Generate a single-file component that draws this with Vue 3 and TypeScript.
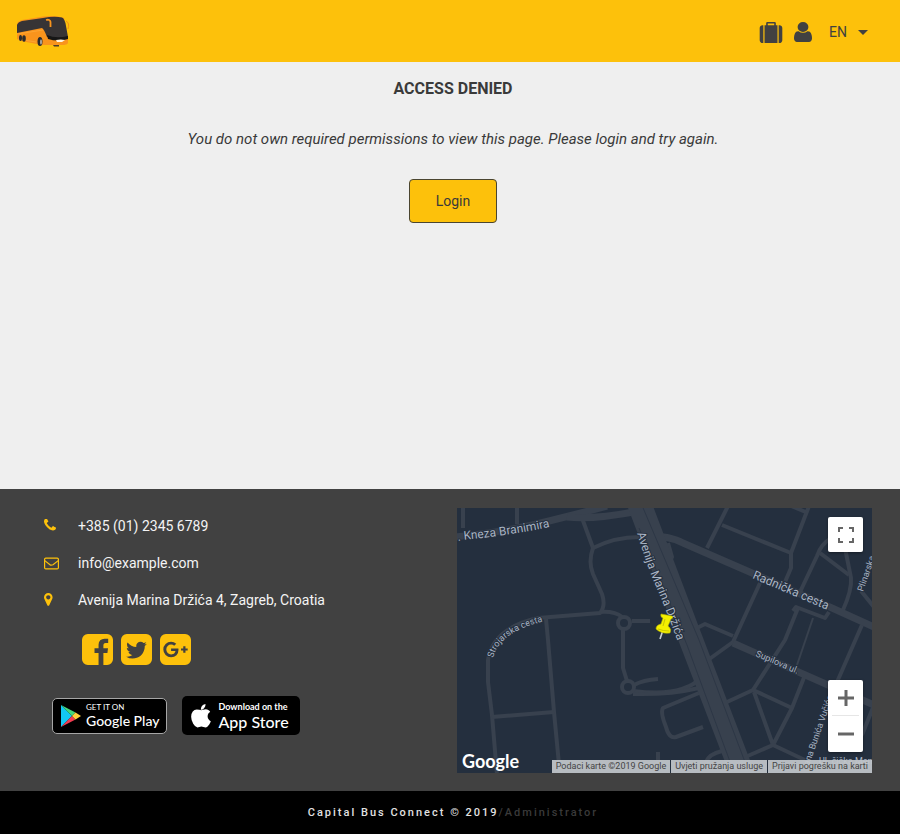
<script setup lang="ts">
import { ref } from 'vue'

interface Contact {
  icon: 'phone' | 'mail' | 'pin'
  text: string
  href: string
}

interface Social {
  name: string
  path: string
}

const language = ref('EN')

const contacts: Contact[] = [
  { icon: 'phone', text: '+385 (01) 2345 6789', href: 'tel:+385123456789' },
  { icon: 'mail', text: 'info@example.com', href: 'mailto:info@example.com' },
  { icon: 'pin', text: 'Avenija Marina Držića 4, Zagreb, Croatia', href: '#map' },
]

const tile = 'v960q0 119-84.5 203.5t-203.5 84.5h-960q-119 0-203.5-84.5t-84.5-203.5v-960q0-119 84.5-203.5t203.5-84.5h960q119 0 203.5 84.5t84.5 203.5z'

const socials: Social[] = [
  {
    name: 'Facebook',
    path: 'M1376 128q119 0 203.5 84.5t84.5 203.5v960q0 119-84.5 203.5t-203.5 84.5h-188v-595h199l30-232h-229v-148q0-56 23.5-84t91.5-28l122-1v-207q-63-9-178-9-136 0-217.5 80t-81.5 226v171h-200v232h200v595h-532q-119 0-203.5-84.5t-84.5-203.5v-960q0-119 84.5-203.5t203.5-84.5h960z',
  },
  {
    name: 'Twitter',
    path: 'M1408 610q-56 25-121 34 68-40 93-117-65 38-134 51-61-66-153-66-87 0-148.5 61.5t-61.5 148.5q0 29 5 48-129-7-242-65t-192-155q-29 50-29 106 0 114 91 175-47-1-100-26v2q0 75 50 133.5t123 72.5q-29 8-51 8-13 0-39-4 21 63 74.5 104t121.5 42q-116 90-261 90-26 0-50-3 148 94 322 94 112 0 210-35.5t168-95 120.5-137 75-162 24.5-168.5q0-18-1-27 63-45 105-109zm256-194' + tile,
  },
  {
    name: 'Google Plus',
    path: 'M1045 905q0-26-6-64h-362v132h217q-3 24-16.5 50t-37.5 53-66.5 44.5-96.5 17.5q-99 0-169-71t-70-171 70-171 169-71q92 0 153 59l104-101q-108-100-257-100-160 0-272 112.5t-112 271.5 112 271.5 272 112.5q165 0 266.5-105t101.5-270zm345 46h109v-110h-109v-110h-110v110h-110v110h110v110h110v-110zm274-535' + tile,
  },
]

const streets: string[] = [
  'M6 -2V20',
  'M60 -2V16',
  'M125 10L136 40Q131 54 136 66L145 86Q149 98 143 105L81 110Q36 120 31 152V174L35 207L40 267',
  'M136 40Q158 29 182 29',
  'M143 104Q158 103 165 109',
  'M175 113H193',
  'M166 122V160L170 173',
  'M177 177Q186 172 201 171',
  'M176 183Q208 187 225 181T239 171',
  'M176 186Q212 187 242 180',
  'M89 111L91 132L97 204L103 267',
  'M35 209L97 204',
  'M211 35L215 49L210 60',
  'M271 -2L250 40',
  'M265 17L334 45',
  'M352 -2L334 45V60L328 74',
  'M332 -3L351 5',
  'M373 31Q364 36 360 48L343 84',
  'M363 45L392 67',
  'M388 40L394 70Q395 82 386 102',
  'M404 83L417 99',
  'M303 75L276 134L251 152',
  'M240 120L248 116L276 128',
  'M336 103L339 99L368 110L372 104',
  'M341 100L328 132L296 182L270 194',
  'M405 117L380 174',
  'M296 182L335 200',
  'M348 167L335 200L316 237L297 184',
  'M286 250L316 237L350 253',
  'M417 197L405 227',
  'M242 185L206 200Q203 204 209 219Q212 231 219 229L246 219',
  'M201 244V255',
  'M249 254Q252 246 265 243',
]
</script>

<template>
  <div class="page">
    <header class="topbar">
      <a class="brand" href="#" aria-label="Home">
        <svg width="54" height="34" viewBox="0 0 54 34">
          <path d="M1 10Q2 7 6 6L27 2.500Q40 1 48 4L52 24V29Q51 31 46 31L26 31L5 27L1 25Z" fill="#f9941c" />
          <path d="M1 19V11Q2 8 6 7L27 4Q38 2 46 3.500Q49 5 50 12L52 23Q50 25 44 25L31 23Q28 15 26 14Z" fill="#373435" />
          <path d="M31 21Q40 25 52 22V25Q42 28 32 25Z" fill="#161616" />
          <path d="M40 26Q45 25 49 26L46 28H41Z" fill="#fff4df" />
          <path d="M30 6Q34 5 34.500 8V13" fill="none" stroke="#f9941c" stroke-width="1.800" />
          <path d="M50 7Q54 9 52 15" fill="none" stroke="#ed8f16" />
          <path d="M1 20L27 16M2 25L20 28" stroke="#ffb03e" stroke-width=".6" />
          <ellipse cx="4.500" cy="24" rx="1.500" ry="3" fill="#2b2b2b" />
          <ellipse cx="8" cy="24.500" rx="1.800" ry="3.200" fill="#2b2b2b" />
          <ellipse cx="24" cy="27.500" rx="2.500" ry="4.500" fill="#2b2b2b" />
          <ellipse cx="25" cy="28" rx="1" ry="2.800" fill="#aaa69f" />
          <path d="M37 31H43V32.500H38Z" fill="#4b3b2b" />
        </svg>
      </a>
      <nav class="tools">
        <a href="#" aria-label="Trips">
          <svg width="24" height="21" viewBox="0 0 1792 1664">
            <path d="M640 256h512v-128h-512v128zm-352 0v1408h-64q-92 0-158-66t-66-158v-960q0-92 66-158t158-66h64zm1120 0v1408h-1024v-1408h128v-160q0-40 28-68t68-28h576q40 0 68 28t28 68v160h128zm384 224v960q0 92-66 158t-158 66h-64v-1408h64q92 0 158 66t66 158z" />
          </svg>
        </a>
        <a href="#" aria-label="Account">
          <svg width="18" height="20" viewBox="256 128 1280 1536" preserveAspectRatio="none">
            <path d="M1536 1399q0 109-62.5 187t-150.5 78h-854q-88 0-150.5-78t-62.5-187q0-85 8.5-160.5t31.5-152 58.5-131 94-89 134.5-34.5q131 128 313 128t313-128q76 0 134.5 34.5t94 89 58.5 131 31.5 152 8.5 160.5zm-256-887q0 159-112.5 271.5t-271.5 112.5-271.5-112.5-112.5-271.5 112.5-271.5 271.5-112.5 271.5 112.5 112.5 271.5z" />
          </svg>
        </a>
        <div class="language">
          <select v-model="language" aria-label="Language">
            <option>EN</option>
            <option>HR</option>
          </select>
          <span class="caret"></span>
        </div>
      </nav>
    </header>

    <main class="content">
      <h1>ACCESS DENIED</h1>
      <p>You do not own required permissions to view this page. Please login and try again.</p>
      <button class="login" type="button">Login</button>
    </main>

    <footer>
      <div class="info">
        <section class="about">
          <ul class="contacts">
            <li v-for="item in contacts" :key="item.icon">
              <svg v-if="item.icon === 'phone'" width="15" height="15" viewBox="192 192 1760 1760">
                <path d="M1600 1240q0 27-10 70.5t-21 68.5q-21 50-122 106-94 51-186 51-27 0-53-3.5t-57.5-12.5-47-14.5-55.5-20.5-49-18q-98-35-175-83-127-79-264-216t-216-264q-48-77-83-175-3-9-18-49t-20.5-55.5-14.5-47-12.5-57.5-3.5-53q0-92 51-186 56-101 106-122 25-11 68.5-21t70.5-10q14 0 21 3 18 6 53 76 11 19 30 54t35 63.5 31 53.5q3 4 17.5 25t21.5 35.5 7 28.5q0 20-28.5 50t-62 55-62 53-28.5 46q0 9 5 22.5t8.5 20.5 14 24 11.5 19q76 137 174 235t235 174q2 1 19 11.5t24 14 20.5 8.5 22.5 5q18 0 46-28.5t53-62 55-62 50-28.5q14 0 28.5 7t35.5 21.5 25 17.5q25 15 53.5 31t63.5 35 54 30q70 35 76 53 3 7 3 21z" />
              </svg>
              <svg v-else-if="item.icon === 'mail'" width="15" height="15" viewBox="0 0 15 15">
                <g fill="none" stroke="#fdc10b" stroke-width="1.2">
                  <rect x=".6" y="2.1" width="13.8" height="10.8" rx="1.2" />
                  <path d="M.8 4.6Q5 8 6 8.8T9 8.8L14.2 4.6" />
                </g>
              </svg>
              <svg v-else width="15" height="15" viewBox="384 128 1792 1792">
                <path d="M1152 640q0-106-75-181t-181-75-181 75-75 181 75 181 181 75 181-75 75-181zm256 0q0 109-33 179l-364 774q-16 33-47.5 52t-67.5 19-67.5-19-46.5-52l-365-774q-33-70-33-179 0-212 150-362t362-150 362 150 150 362z" />
              </svg>
              <a :href="item.href">{{ item.text }}</a>
            </li>
          </ul>
          <div class="socials">
            <a v-for="item in socials" :key="item.name" href="#" :aria-label="item.name">
              <svg width="31" height="31" viewBox="128 128 1536 1536"><path :d="item.path" /></svg>
            </a>
          </div>
          <div class="stores">
            <a class="store play" href="#">
              <svg width="22" height="24" viewBox="0 0 22 24">
                <path d="M1 1V23L12 12Z" fill="#12c8f4" />
                <path d="M1 1L15.500 8.500L12 12Z" fill="#43d77b" />
                <path d="M1 23L15.500 15.500L12 12Z" fill="#f23b50" />
                <path d="M15.500 8.500L21 12L15.500 15.500L12 12Z" fill="#ffd13b" />
              </svg>
              <span class="label"><small>GET IT ON</small><b>Google Play</b></span>
            </a>
            <a class="store apple" href="#">
              <svg width="20" height="24" viewBox="190 0 1400 1700">
                <path d="M1585 1215q-39 125-123 250-129 196-257 196-49 0-140-32-86-32-151-32-61 0-142 33-81 34-132 34-152 0-301-259-147-261-147-503 0-228 113-374 113-144 284-144 72 0 177 30 104 30 138 30 45 0 143-34 102-34 173-34 119 0 213 65 52 36 104 100-79 67-114 118-65 94-65 207 0 124 69 223t158 126zm-376-1173q0 61-29 136-30 75-93 138-54 54-108 72-37 11-104 17 3-149 78-257 74-107 250-148 1 3 2.5 11t2.5 11q0 4 .5 10t.5 10z" />
              </svg>
              <span class="label"><small>Download on the</small><b>App Store</b></span>
            </a>
          </div>
        </section>

        <section id="map" class="map" aria-label="Map">
          <svg class="canvas" viewBox="0 0 415 265" preserveAspectRatio="xMidYMid slice">
            <defs>
              <path id="strojarska" d="M36 150Q42 125 84 114" />
              <path id="avenija" d="M180 25Q189 56 200 81T223 140" />
              <path id="kneza" d="M1 33L5 32Q50 28 98 18" />
            </defs>
            <g class="streets">
              <path v-for="d in streets" :key="d" :d="d" />
              <circle cx="167" cy="115" r="6" />
              <circle cx="171" cy="179" r="6" />
              <path class="thin" d="M356 110L340 157" />
              <path class="wide" d="M-2 29Q50 24 92 13L120 6L150 -2" />
              <path class="wide" d="M110 9Q135 12 182 3" />
              <path class="wide" d="M190 28Q214 28 226 35L295 65L375 100L417 119" />
              <path class="wide" d="M276 135L371 177L417 197" />
              <path class="avenue" d="M182 -5L234 132L287 270" />
              <path class="divider" d="M184 -5L242 132L294 270M182 20L230 137L279 270" />
            </g>
            <g class="names">
              <text class="large"><textPath href="#kneza">. Kneza Branimira</textPath></text>
              <text class="large"><textPath href="#avenija">Avenija Marina Držića</textPath></text>
              <text class="large" transform="translate(295 70) rotate(23)">Radnička cesta</text>
              <text><textPath href="#strojarska">Strojarska cesta</textPath></text>
              <text transform="translate(298 148) rotate(23)">Supilova ul.</text>
              <text transform="translate(406 84) rotate(-71)">Plinarska</text>
              <text transform="translate(352 258) rotate(-71)">ana Bunića Vučića</text>
              <text transform="translate(362 256)">Ul. čička Men</text>
            </g>
            <g class="marker">
              <path d="M206 122L203 131" stroke="#c9ced4" stroke-width="1.600" />
              <path d="M204 106L215 108Q217 110 214 111L211 118Q215 121 213 125Q204 126 199 121Q199 117 204 116L206 110Q203 109 204 106Z" fill="#f5f000" stroke="#b9b500" stroke-width=".6" />
              <path d="M208 111L206 118M201 121Q206 123 212 123" fill="none" stroke="#c8c400" />
            </g>
          </svg>
          <span class="google">Google</span>
          <button class="fullscreen" type="button" aria-label="Toggle fullscreen">
            <svg width="18" height="18" viewBox="0 0 18 18"><path d="M2 6V2H6M12 2H16V6M16 12V16H12M6 16H2V12" /></svg>
          </button>
          <div class="zoom">
            <button type="button" aria-label="Zoom in"><svg width="18" height="18" viewBox="0 0 18 18"><path d="M1 9H17M9 1V17" /></svg></button>
            <button type="button" aria-label="Zoom out"><svg width="18" height="18" viewBox="0 0 18 18"><path d="M1 9H17" /></svg></button>
          </div>
          <div class="terms">
            <span>Podaci karte ©2019 Google</span>
            <a href="#">Uvjeti pružanja usluge</a>
            <a href="#">Prijavi pogrešku na karti</a>
          </div>
        </section>
      </div>
      <div class="legal">Capital Bus Connect © 2019<a href="#">/Administrator</a></div>
    </footer>
  </div>
</template>

<style>
body {
  margin: 0;
  background: #efefef;
}
</style>

<style scoped>
.page {
  display: flex;
  flex-direction: column;
  min-height: 100vh;
  font-family: Roboto, "Liberation Sans", sans-serif;
  font-size: 14px;
  line-height: 20px;
  color: #3a3a3a;
}

a {
  color: inherit;
  text-decoration: none;
}

svg {
  display: block;
  flex: none;
}

button {
  font: inherit;
  color: inherit;
  cursor: pointer;
}

.topbar {
  display: flex;
  align-items: center;
  justify-content: space-between;
  height: 62px;
  padding: 0 32px 0 16px;
  background: #fdc10b;
}

.tools {
  display: flex;
  align-items: center;
  gap: 11px;
  padding-top: 2px;
  fill: #414141;
}

.language {
  display: flex;
  align-items: center;
  gap: 10px;
  margin-left: 6px;
}

.language select {
  appearance: none;
  padding: 0;
  border: 0;
  background: none;
  font: inherit;
  color: #414141;
}

.caret {
  border: 5px solid transparent;
  border-top-color: #414141;
  border-bottom: 0;
}

.content {
  display: flex;
  flex: 1;
  flex-direction: column;
  align-items: center;
  padding: 17px 0 0 6px;
}

h1 {
  margin: 0 0 30px;
  font-size: 16px;
  line-height: 20px;
  font-weight: 700;
}

p {
  margin: 0 0 30px;
  font-size: 15px;
  font-style: italic;
}

.login {
  padding: 11px 26px;
  border: 1px solid #4a4530;
  border-radius: 4px;
  background: #fdc10b;
  line-height: 20px;
}

.info {
  display: grid;
  grid-template-columns: 1fr 1fr;
  padding: 19px 28px 18px 42px;
  background: #414141;
}

.contacts {
  display: flex;
  flex-direction: column;
  gap: 17px;
  margin: 0;
  padding: 8px 0 0 2px;
  list-style: none;
  color: #f4f4f4;
  fill: #fdc10b;
}

.contacts li {
  display: flex;
  align-items: center;
  gap: 19px;
}

.socials {
  display: flex;
  gap: 8px;
  padding: 24px 0 0 40px;
  fill: #fdc10b;
}

.stores {
  display: flex;
  align-items: center;
  gap: 15px;
  padding: 31px 0 0 10px;
}

.store {
  display: flex;
  align-items: center;
  box-sizing: border-box;
  border-radius: 5px;
  background: #000;
  color: #fff;
  fill: #fff;
  font-family: Lato, sans-serif;
  white-space: nowrap;
}

.play {
  gap: 4px;
  height: 36px;
  padding: 0 7px;
  border: 1px solid #a6a6a6;
}

.apple {
  gap: 7px;
  height: 39px;
  padding: 0 11px 0 9px;
}

.label {
  display: flex;
  flex-direction: column;
}

.label small {
  font-size: 8px;
  line-height: 10px;
}

.label b {
  font-size: 14px;
  line-height: 17px;
  font-weight: 500;
}

.apple small {
  font-weight: 700;
  font-size: 9px;
  line-height: 11px;
}

.apple b {
  font-size: 16px;
  line-height: 19px;
}

.map {
  position: relative;
  min-height: 265px;
  overflow: hidden;
  background: #242f3e;
}

.canvas {
  position: absolute;
  inset: 0;
  width: 100%;
  height: 100%;
}

.streets {
  fill: none;
  stroke: #38414e;
  stroke-width: 4;
  stroke-linejoin: round;
}

.streets .thin {
  stroke-width: 2;
}

.streets .wide {
  stroke-width: 7;
}

.streets .avenue {
  stroke-width: 24;
}

.streets .divider {
  stroke: #2d3746;
  stroke-width: 1;
}

.names {
  fill: #a9b4c3;
  stroke: #242f3e;
  stroke-width: 2px;
  paint-order: stroke;
  font-size: 9px;
}

.names .large {
  font-size: 12px;
}

.marker {
  stroke-linejoin: round;
}

.google {
  position: absolute;
  left: 5px;
  bottom: 2px;
  font-family: Lato, sans-serif;
  font-size: 18px;
  font-weight: 700;
  color: #fff;
}

.fullscreen,
.zoom {
  position: absolute;
  right: 9px;
  width: 35px;
  border: 0;
  border-radius: 2px;
  background: #fff;
  box-shadow: 0 1px 3px #0006;
}

.fullscreen {
  top: 9px;
  display: grid;
  place-items: center;
  height: 35px;
  padding: 0;
}

.zoom {
  bottom: 21px;
  height: 72px;
}

.zoom button {
  display: grid;
  place-items: center;
  width: 100%;
  height: 36px;
  padding: 0;
  border: 0;
  background: linear-gradient(#e6e6e6, #e6e6e6) bottom / 27px 1px no-repeat;
}

.zoom button:last-child {
  background: none;
}

.fullscreen path,
.zoom path {
  fill: none;
  stroke: #666;
  stroke-width: 2;
}

.zoom path {
  stroke-width: 3;
}

.terms {
  position: absolute;
  right: 0;
  bottom: 0;
  display: flex;
  gap: 1px;
  font-size: 9px;
  line-height: 13px;
  color: #444;
}

.terms > * {
  padding: 0 4px;
  background: #c2c6cbee;
}

.legal {
  padding: 12px 0 11px 6px;
  background: #000;
  color: #e2e2e2;
  font-size: 11px;
  font-weight: 500;
  letter-spacing: 2px;
  text-align: center;
}

.legal a {
  color: #3a3a3a;
}
</style>
